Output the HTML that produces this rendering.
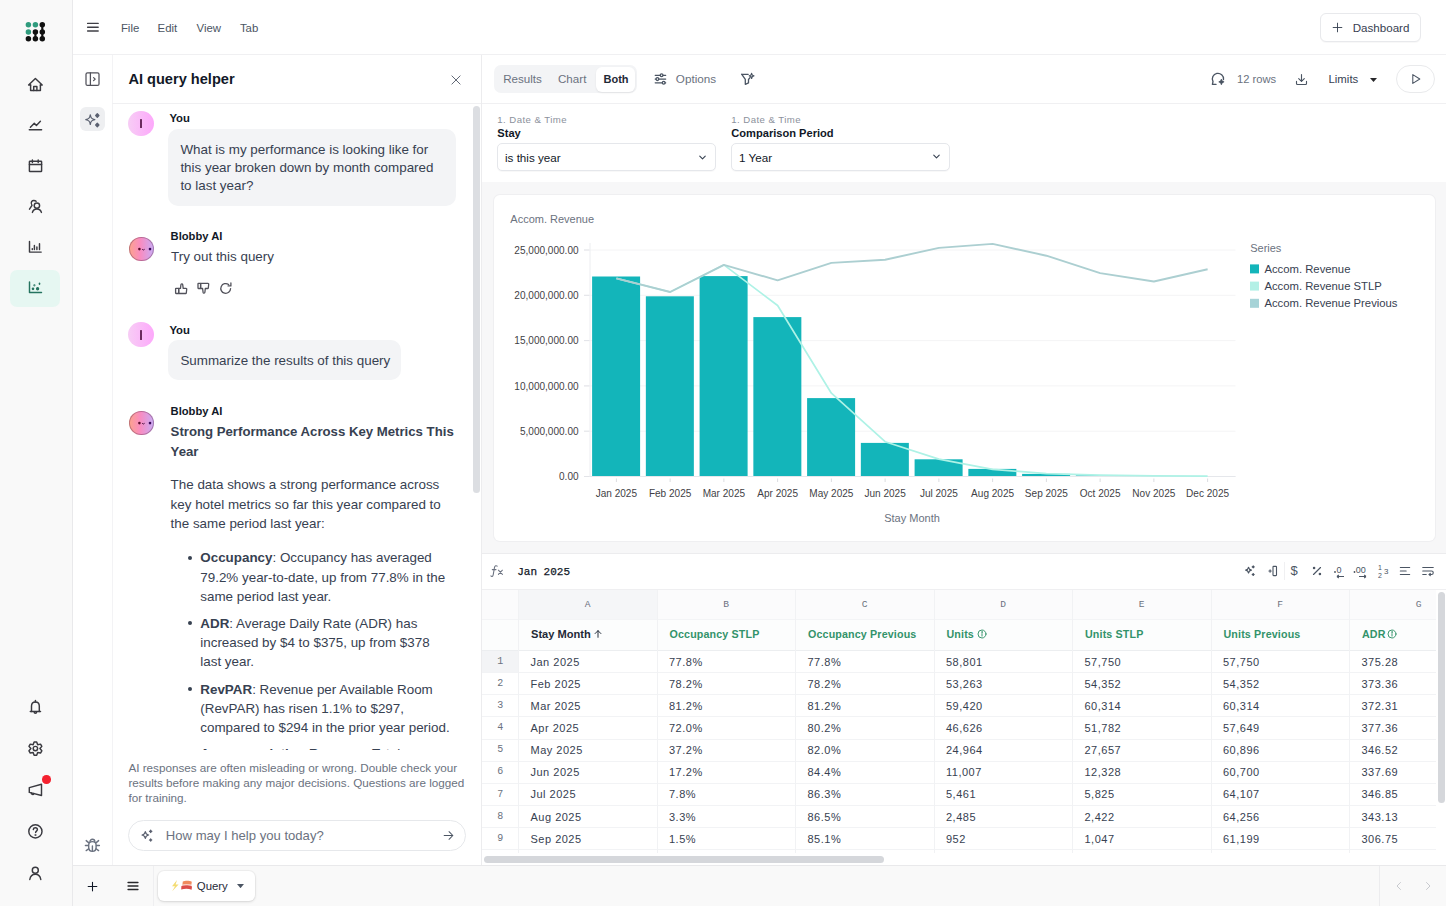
<!DOCTYPE html>
<html><head><meta charset="utf-8"><title>Query</title>
<style>
html,body{margin:0;padding:0;}
body{width:1446px;height:906px;overflow:hidden;position:relative;background:#fff;font-family:"Liberation Sans", sans-serif;}
.r{position:absolute;box-sizing:border-box;}
.t{position:absolute;white-space:nowrap;}
</style></head><body>
<div class="r" style="left:0.00px;top:0.00px;width:72.00px;height:906.00px;background:#f9f9f9;"></div>
<div class="r" style="left:72.00px;top:0.00px;width:1.00px;height:906.00px;background:#e9e9eb;"></div>
<div class="r" style="left:73.00px;top:54.00px;width:1373.00px;height:1.00px;background:#f0f0f2;"></div>
<div class="r" style="left:111.50px;top:55.00px;width:1.00px;height:810.00px;background:#f3f3f5;"></div>
<div class="r" style="left:112.00px;top:103.00px;width:369.00px;height:1.00px;background:#f0f0f2;"></div>
<div class="r" style="left:481.00px;top:55.00px;width:1.00px;height:810.00px;background:#ececee;"></div>
<div class="r" style="left:482.00px;top:102.50px;width:964.00px;height:1.00px;background:#f0f0f2;"></div>
<div class="r" style="left:482.00px;top:182.00px;width:964.00px;height:371.00px;background:#f7f7f8;"></div>
<div class="r" style="left:482.00px;top:552.50px;width:964.00px;height:1.00px;background:#ececee;"></div>
<div class="r" style="left:494.00px;top:195.00px;width:941.00px;height:346.00px;background:#fff;border-radius:6px;box-shadow:0 0 0 1px #efeff1;"></div>
<div class="r" style="left:482.00px;top:588.50px;width:964.00px;height:1.00px;background:#efeff1;"></div>
<div class="r" style="left:73.00px;top:865.00px;width:1373.00px;height:41.00px;background:#f9f9f9;"></div>
<div class="r" style="left:73.00px;top:865.00px;width:1373.00px;height:1.00px;background:#e9e9eb;"></div>
<svg class="r" style="left:20.00px;top:15.00px;" width="32" height="32" viewBox="0 0 32 32" fill="none"><circle cx="8.399999999999999" cy="9.8" r="2.75" fill="#2f9b7d"/><circle cx="15.399999999999999" cy="9.8" r="2.75" fill="#2f9b7d"/><circle cx="22.299999999999997" cy="9.8" r="2.75" fill="#111"/><circle cx="8.399999999999999" cy="16.9" r="2.75" fill="#2f9b7d"/><circle cx="15.399999999999999" cy="16.9" r="2.75" fill="#111"/><circle cx="22.299999999999997" cy="16.9" r="2.75" fill="#111"/><circle cx="8.399999999999999" cy="23.700000000000003" r="2.75" fill="#111"/><circle cx="15.399999999999999" cy="23.700000000000003" r="2.75" fill="#111"/><circle cx="22.299999999999997" cy="23.700000000000003" r="2.75" fill="#111"/><rect x="14.349999999999998" y="16.9" width="2.1" height="6.800000000000004" fill="#111"/><rect x="21.249999999999996" y="9.8" width="2.1" height="13.900000000000002" fill="#111"/></svg>
<svg class="r" style="left:24px;top:74px" width="23" height="22" viewBox="24 74 23 22" fill="none" stroke="#3a3a40" stroke-width="1.45" stroke-linecap="round" stroke-linejoin="round"><path d="M30.6 85 H28.6 L35.4 78.4 L42.2 85 H40.4"/><path d="M30.6 85 V90.4 H40.4 V85"/><path d="M33.7 90.4 V86.4 H36.9 V90.4"/></svg>
<svg class="r" style="left:24px;top:114px" width="23" height="22" viewBox="24 114 23 22" fill="none" stroke="#3a3a40" stroke-width="1.45" stroke-linecap="round" stroke-linejoin="round"><path d="M30.4 127.3 L34.3 123.3 L36.4 125.4 L40.4 121.3"/><path d="M29.3 129.8 H41.6"/></svg>
<svg class="r" style="left:24px;top:155px" width="23" height="22" viewBox="24 155 23 22" fill="none" stroke="#3a3a40" stroke-width="1.45" stroke-linecap="round" stroke-linejoin="round"><rect x="29.4" y="161.2" width="12.2" height="10.4" rx="0.6"/><path d="M29.4 164.4 H41.6"/><path d="M32.4 160 V162.4 M38.2 160 V162.4"/></svg>
<svg class="r" style="left:24px;top:196px" width="23" height="22" viewBox="24 196 23 22" fill="none" stroke="#3a3a40" stroke-width="1.45" stroke-linecap="round" stroke-linejoin="round"><circle cx="36.9" cy="205.6" r="2.7"/><path d="M32.4 212.4 C33 210 34.6 208.9 36.9 208.9 C39.2 208.9 40.8 210 41.4 212.4"/><path d="M36.1 201.3 C35 200.3 32.6 200.1 31.6 201.6 C30.8 202.9 31.3 204.4 32 205.4 L29.5 209.2"/></svg>
<svg class="r" style="left:24px;top:237px" width="23" height="22" viewBox="24 237 23 22" fill="none" stroke="#3a3a40" stroke-width="1.45" stroke-linecap="round" stroke-linejoin="round"><path d="M29.5 241.5 V252.1 H41.2"/><path d="M32.3 248.6 V249.4 M34.4 245.4 V249.4 M36.9 246.9 V249.4 M39.5 243.8 V249.4"/></svg>
<div class="r" style="left:10.00px;top:270.00px;width:50.00px;height:37.00px;background:#e6f7f2;border-radius:7px;"></div>
<svg class="r" style="left:24px;top:277px" width="23" height="22" viewBox="24 277 23 22" fill="none" stroke="#24735f" stroke-width="1.45" stroke-linecap="round" stroke-linejoin="round"><path d="M29.5 282 V292.5 H41.5"/><circle cx="33" cy="288.8" r="0.6" fill="#24735f"/><circle cx="37.6" cy="288.8" r="0.95" fill="#24735f"/><circle cx="34.4" cy="285.3" r="0.35" fill="#24735f"/><path d="M39.5 283.3 V284.2"/></svg>
<svg class="r" style="left:24px;top:696px" width="23" height="23" viewBox="24 696 23 23" fill="none" stroke="#3a3a40" stroke-width="1.45" stroke-linecap="round" stroke-linejoin="round"><path d="M31.5 711.4 V706 C31.5 703.6 33.2 701.9 35.4 701.9 C37.6 701.9 39.3 703.6 39.3 706 V711.4"/><path d="M30.3 711.4 H40.5"/><path d="M35.4 700.4 V701.9"/><path d="M34.2 712 A1.2 1.2 0 0 0 36.6 712"/></svg>
<svg class="r" style="left:24px;top:737px" width="23" height="23" viewBox="24 737 23 23" fill="none" stroke="#3a3a40" stroke-width="1.45" stroke-linecap="round" stroke-linejoin="round"><path d="M33.15 744.70 L34.10 741.92 L36.70 741.92 L37.65 744.70 L40.53 744.14 L41.83 746.39 L39.90 748.60 L41.83 750.81 L40.53 753.06 L37.65 752.50 L36.70 755.28 L34.10 755.28 L33.15 752.50 L30.27 753.06 L28.97 750.81 L30.90 748.60 L28.97 746.39 L30.27 744.14Z"/><circle cx="35.4" cy="748.6" r="2.2"/></svg>
<svg class="r" style="left:24px;top:779px" width="23" height="21" viewBox="24 779 23 21" fill="none" stroke="#3a3a40" stroke-width="1.45" stroke-linecap="round" stroke-linejoin="round"><path d="M29.3 787.6 L41.5 784.3 V795.5 L29.3 792.4 Z"/><path d="M31.4 792.9 A1.2 1.2 0 0 0 33.8 793.5"/></svg>
<div class="r" style="left:42.20px;top:775.30px;width:8.60px;height:8.60px;background:#f4212f;border-radius:50%;"></div>
<svg class="r" style="left:24px;top:820px" width="23" height="23" viewBox="24 820 23 23" fill="none" stroke="#3a3a40" stroke-width="1.45" stroke-linecap="round" stroke-linejoin="round"><circle cx="35.4" cy="831.4" r="6.6"/><path d="M33.3 829.6 C33.4 828.3 34.3 827.8 35.4 827.8 C36.6 827.8 37.4 828.6 37.4 829.6 C37.4 830.9 35.6 831.3 35.6 832.6"/><circle cx="35.5" cy="834.9" r="0.3" fill="#3a3a40"/></svg>
<svg class="r" style="left:24px;top:862px" width="23" height="23" viewBox="24 862 23 23" fill="none" stroke="#3a3a40" stroke-width="1.45" stroke-linecap="round" stroke-linejoin="round"><circle cx="35.3" cy="870.2" r="3"/><path d="M29.8 879.5 C30.4 876 32.5 874.3 35.3 874.3 C38.1 874.3 40.2 876 40.8 879.5"/></svg>
<svg class="r" style="left:84px;top:18px" width="18" height="18" viewBox="84 18 18 18" fill="none" stroke="#3f3f46" stroke-width="1.35" stroke-linecap="round" stroke-linejoin="round"><path d="M87.6 23.4 H98.2 M87.6 27.2 H98.2 M87.6 31 H98.2"/></svg>
<div class="t" style="left:120.90px;top:20.74px;font-size:11.4px;line-height:14.82px;color:#4b5563;font-weight:400;font-family:'Liberation Sans', sans-serif;">File</div>
<div class="t" style="left:157.60px;top:20.74px;font-size:11.4px;line-height:14.82px;color:#4b5563;font-weight:400;font-family:'Liberation Sans', sans-serif;">Edit</div>
<div class="t" style="left:196.60px;top:20.74px;font-size:11.4px;line-height:14.82px;color:#4b5563;font-weight:400;font-family:'Liberation Sans', sans-serif;">View</div>
<div class="t" style="left:239.90px;top:20.74px;font-size:11.4px;line-height:14.82px;color:#4b5563;font-weight:400;font-family:'Liberation Sans', sans-serif;">Tab</div>
<div class="r" style="left:1319.50px;top:12.50px;width:101.00px;height:29.00px;background:#fff;border:1px solid #e8e9ec;border-radius:6px;box-shadow:0 1px 1px rgba(0,0,0,0.03);"></div>
<svg class="r" style="left:1331.10px;top:20.80px" width="13" height="13" viewBox="0 0 24 24" fill="none" stroke="#374151" stroke-width="1.7" stroke-linecap="round" stroke-linejoin="round"><path d="M12 4v16M4 12h16"/></svg>
<div class="t" style="left:1352.70px;top:20.24px;font-size:11.6px;line-height:15.08px;color:#374151;font-weight:400;font-family:'Liberation Sans', sans-serif;">Dashboard</div>
<svg class="r" style="left:80px;top:66px" width="26" height="26" viewBox="80 66 26 26" fill="none" stroke="#52525b" stroke-width="1.25" stroke-linecap="round" stroke-linejoin="round"><rect x="86" y="72.8" width="13" height="12.6" rx="1.5"/><path d="M90.4 72.8 V85.4"/><path d="M93.6 77.6 L95.2 79.1 L93.6 80.6"/></svg>
<div class="r" style="left:80.00px;top:107.00px;width:25.00px;height:24.00px;background:#eeeff1;border-radius:6px;"></div>
<svg class="r" style="left:80px;top:107px" width="25" height="24" viewBox="80 107 25 24" fill="none" stroke="#5b6170" stroke-width="1.3" stroke-linecap="round" stroke-linejoin="round"><path d="M90.3 114.9 C90.7 118 91.6 118.9 94.8 119.6 C91.6 120.3 90.7 121.2 90.3 124.3 C89.9 121.2 89 120.3 85.8 119.6 C89 118.9 89.9 118 90.3 114.9 Z"/><path d="M97.3 113.8 L98.9 115.5 L97.3 117.2 L95.7 115.5 Z" fill="#5b6170"/><path d="M97.3 123.3 L98.9 125 L97.3 126.7 L95.7 125 Z" fill="#5b6170"/></svg>
<svg class="r" style="left:80px;top:834px" width="26" height="24" viewBox="80 834 26 24" fill="none" stroke="#6b7280" stroke-width="1.4" stroke-linecap="round" stroke-linejoin="round"><path d="M90 841.6 A2.4 2.4 0 0 1 94.8 841.6"/><path d="M88.7 845 C88.7 842.8 90.3 841.6 92.4 841.6 C94.5 841.6 96.1 842.8 96.1 845 V847.4 C96.1 849.6 94.5 851.2 92.4 851.2 C90.3 851.2 88.7 849.6 88.7 847.4 Z"/><path d="M92.4 846 V851"/><path d="M88.6 842.6 L86.2 840.6 M88.3 845.5 H85.4 M88.7 848.8 L86.2 850.6 M96.2 842.6 L98.6 840.6 M96.5 845.5 H99.4 M96.1 848.8 L98.6 850.6"/></svg>
<div class="t" style="left:128.40px;top:70.45px;font-size:14.6px;line-height:18.98px;color:#111827;font-weight:700;font-family:'Liberation Sans', sans-serif;">AI query helper</div>
<svg class="r" style="left:449.00px;top:72.50px" width="14" height="14" viewBox="0 0 24 24" fill="none" stroke="#4b5563" stroke-width="1.5" stroke-linecap="round" stroke-linejoin="round"><path d="M5 5l14 14M19 5L5 19"/></svg>
<div class="r" style="left:473.00px;top:105.50px;width:7.00px;height:387.50px;background:#dcdee2;border-radius:4px;"></div>
<div class="r" style="left:128.20px;top:110.60px;width:25.40px;height:25.40px;background:linear-gradient(90deg,#f7cdf5,#fda8fb);border-radius:50%;"></div>
<div class="r" style="left:139.90px;top:118.80px;width:2.00px;height:9.70px;background:#6b2a5e;border-radius:0.5px;"></div>
<div class="t" style="left:169.40px;top:110.74px;font-size:11.3px;line-height:14.69px;color:#111827;font-weight:700;font-family:'Liberation Sans', sans-serif;">You</div>
<div class="r" style="left:168.30px;top:129.20px;width:287.70px;height:76.80px;background:#f3f4f6;border-radius:10px;"></div>
<div class="t" style="left:180.40px;top:140.95px;font-size:13.4px;line-height:17.42px;color:#374151;font-weight:400;font-family:'Liberation Sans', sans-serif;">What is my performance is looking like for</div>
<div class="t" style="left:180.40px;top:159.35px;font-size:13.4px;line-height:17.42px;color:#374151;font-weight:400;font-family:'Liberation Sans', sans-serif;">this year broken down by month compared</div>
<div class="t" style="left:180.40px;top:177.25px;font-size:13.4px;line-height:17.42px;color:#374151;font-weight:400;font-family:'Liberation Sans', sans-serif;">to last year?</div>
<div class="r" style="left:129.40px;top:236.60px;width:24.80px;height:24.40px;background:linear-gradient(90deg,#fca38b 0%,#f98cc0 45%,#c8acf7 100%);border-radius:50%;box-shadow:inset 0 0 0 1px rgba(120,60,90,0.45);"></div>
<svg class="r" style="left:129.80px;top:236.80px;" width="24" height="24" viewBox="0 0 24 24" fill="none"><circle cx="9.399999999999977" cy="12.1" r="1.3" fill="#5a0d2a"/><circle cx="20.0" cy="12.1" r="1.3" fill="#3a0a5a"/><path d="M12.2 12.3q1.2 1.4 2.4 0" stroke="#4a1040" stroke-width="1" fill="none"/></svg>
<div class="t" style="left:170.60px;top:228.64px;font-size:11.2px;line-height:14.56px;color:#111827;font-weight:700;font-family:'Liberation Sans', sans-serif;">Blobby AI</div>
<div class="t" style="left:171.00px;top:248.25px;font-size:13.4px;line-height:17.42px;color:#374151;font-weight:400;font-family:'Liberation Sans', sans-serif;">Try out this query</div>
<svg class="r" style="left:172px;top:280px" width="62" height="18" viewBox="172 280 62 18" fill="none" stroke="#52525b" stroke-width="1.3" stroke-linecap="round" stroke-linejoin="round"><rect x="175.6" y="288.4" width="3.1" height="5.1" rx="0.4"/><path d="M178.7 288.4 H180.5 L180.9 284.7 C181 283.7 182.5 283.5 182.7 284.6 L183.2 288.4 H186 C186.5 288.4 186.8 288.8 186.7 289.3 L186.3 293 C186.2 293.3 186 293.5 185.7 293.5 H178.7 Z"/><rect x="198" y="283.3" width="2.6" height="5.2" rx="0.4"/><path d="M200.6 283.3 H208 C208.4 283.3 208.8 283.7 208.7 284.2 L208.3 288 C208.2 288.3 208 288.5 207.7 288.5 H205.3 L204.9 292.3 C204.8 293.3 203.3 293.5 203.1 292.4 L202.6 288.5 H200.6 Z"/><path d="M230.6 288.6 A4.9 4.9 0 1 1 228.6 284.5"/><path d="M230.9 283 V285.9 H228.1"/></svg>
<div class="r" style="left:128.20px;top:321.80px;width:25.40px;height:25.40px;background:linear-gradient(90deg,#f7cdf5,#fda8fb);border-radius:50%;"></div>
<div class="r" style="left:139.90px;top:330.00px;width:2.00px;height:9.70px;background:#6b2a5e;border-radius:0.5px;"></div>
<div class="t" style="left:169.40px;top:322.54px;font-size:11.3px;line-height:14.69px;color:#111827;font-weight:700;font-family:'Liberation Sans', sans-serif;">You</div>
<div class="r" style="left:168.30px;top:340.40px;width:232.70px;height:40.10px;background:#f3f4f6;border-radius:10px;"></div>
<div class="t" style="left:180.40px;top:352.45px;font-size:13.4px;line-height:17.42px;color:#374151;font-weight:400;font-family:'Liberation Sans', sans-serif;">Summarize the results of this query</div>
<div class="r" style="left:129.40px;top:410.80px;width:24.80px;height:24.40px;background:linear-gradient(90deg,#fca38b 0%,#f98cc0 45%,#c8acf7 100%);border-radius:50%;box-shadow:inset 0 0 0 1px rgba(120,60,90,0.45);"></div>
<svg class="r" style="left:129.80px;top:411.00px;" width="24" height="24" viewBox="0 0 24 24" fill="none"><circle cx="9.399999999999977" cy="12.1" r="1.3" fill="#5a0d2a"/><circle cx="20.0" cy="12.1" r="1.3" fill="#3a0a5a"/><path d="M12.2 12.3q1.2 1.4 2.4 0" stroke="#4a1040" stroke-width="1" fill="none"/></svg>
<div class="t" style="left:170.60px;top:403.94px;font-size:11.2px;line-height:14.56px;color:#111827;font-weight:700;font-family:'Liberation Sans', sans-serif;">Blobby AI</div>
<div class="t" style="left:170.60px;top:423.45px;font-size:13.2px;line-height:17.16px;color:#374151;font-weight:700;font-family:'Liberation Sans', sans-serif;">Strong Performance Across Key Metrics This</div>
<div class="t" style="left:170.60px;top:442.65px;font-size:13.2px;line-height:17.16px;color:#374151;font-weight:700;font-family:'Liberation Sans', sans-serif;">Year</div>
<div class="t" style="left:170.60px;top:476.45px;font-size:13.4px;line-height:17.42px;color:#374151;font-weight:400;font-family:'Liberation Sans', sans-serif;">The data shows a strong performance across</div>
<div class="t" style="left:170.60px;top:495.75px;font-size:13.4px;line-height:17.42px;color:#374151;font-weight:400;font-family:'Liberation Sans', sans-serif;">key hotel metrics so far this year compared to</div>
<div class="t" style="left:170.60px;top:514.75px;font-size:13.4px;line-height:17.42px;color:#374151;font-weight:400;font-family:'Liberation Sans', sans-serif;">the same period last year:</div>
<div class="r" style="left:187.60px;top:555.80px;width:4.20px;height:4.20px;background:#374151;border-radius:50%;"></div>
<div class="t" style="left:200.30px;top:549.45px;font-size:13.4px;line-height:17.42px;color:#374151;font-weight:400;font-family:'Liberation Sans', sans-serif;"><b>Occupancy</b>: Occupancy has averaged</div>
<div class="t" style="left:200.30px;top:568.75px;font-size:13.4px;line-height:17.42px;color:#374151;font-weight:400;font-family:'Liberation Sans', sans-serif;">79.2% year-to-date, up from 77.8% in the</div>
<div class="t" style="left:200.30px;top:587.75px;font-size:13.4px;line-height:17.42px;color:#374151;font-weight:400;font-family:'Liberation Sans', sans-serif;">same period last year.</div>
<div class="r" style="left:187.60px;top:621.10px;width:4.20px;height:4.20px;background:#374151;border-radius:50%;"></div>
<div class="t" style="left:200.30px;top:614.75px;font-size:13.4px;line-height:17.42px;color:#374151;font-weight:400;font-family:'Liberation Sans', sans-serif;"><b>ADR</b>: Average Daily Rate (ADR) has</div>
<div class="t" style="left:200.30px;top:633.75px;font-size:13.4px;line-height:17.42px;color:#374151;font-weight:400;font-family:'Liberation Sans', sans-serif;">increased by $4 to $375, up from $378</div>
<div class="t" style="left:200.30px;top:653.15px;font-size:13.4px;line-height:17.42px;color:#374151;font-weight:400;font-family:'Liberation Sans', sans-serif;">last year.</div>
<div class="r" style="left:187.60px;top:686.90px;width:4.20px;height:4.20px;background:#374151;border-radius:50%;"></div>
<div class="t" style="left:200.30px;top:680.55px;font-size:13.4px;line-height:17.42px;color:#374151;font-weight:400;font-family:'Liberation Sans', sans-serif;"><b>RevPAR</b>: Revenue per Available Room</div>
<div class="t" style="left:200.30px;top:699.75px;font-size:13.4px;line-height:17.42px;color:#374151;font-weight:400;font-family:'Liberation Sans', sans-serif;">(RevPAR) has risen 1.1% to $297,</div>
<div class="t" style="left:200.30px;top:719.15px;font-size:13.4px;line-height:17.42px;color:#374151;font-weight:400;font-family:'Liberation Sans', sans-serif;">compared to $294 in the prior year period.</div>
<div class="r" style="left:180px;top:744px;width:280px;height:6.3px;overflow:hidden;">
<div class="t" style="left:20.3px;top:1.0px;font-size:13.4px;line-height:17px;color:#374151;"><b>Accommodation Revenue</b>: Total</div>
<div class="r" style="left:7.60px;top:8.30px;width:4.20px;height:4.20px;background:#374151;border-radius:50%;"></div>
</div>
<div class="t" style="left:128.40px;top:760.34px;font-size:11.7px;line-height:15.21px;color:#6b7280;font-weight:400;font-family:'Liberation Sans', sans-serif;">AI responses are often misleading or wrong. Double check your</div>
<div class="t" style="left:128.40px;top:775.14px;font-size:11.7px;line-height:15.21px;color:#6b7280;font-weight:400;font-family:'Liberation Sans', sans-serif;">results before making any major decisions. Questions are logged</div>
<div class="t" style="left:128.40px;top:789.74px;font-size:11.7px;line-height:15.21px;color:#6b7280;font-weight:400;font-family:'Liberation Sans', sans-serif;">for training.</div>
<div class="r" style="left:128.40px;top:820.20px;width:337.80px;height:30.60px;background:#fff;border:1px solid #e6e8eb;border-radius:16px;"></div>
<div class="r" style="left:139px;top:828px;width:16px;height:16px;color:#5b6170"><svg width="16" height="16" viewBox="0 0 24 24" fill="none" stroke="currentColor" stroke-width="1.8" stroke-linejoin="round"><path d="M9.5 5.5c.5 3 2 4.5 5 5-3 .5-4.5 2-5 5-.5-3-2-4.5-5-5 3-.5 4.5-2 5-5z"/><path d="M17.5 3.2c.2 1.1.7 1.6 1.8 1.8-1.1.2-1.6.7-1.8 1.8-.2-1.1-.7-1.6-1.8-1.8 1.1-.2 1.6-.7 1.8-1.8z" fill="currentColor"/><path d="M17.5 16.2c.2 1.1.7 1.6 1.8 1.8-1.1.2-1.6.7-1.8 1.8-.2-1.1-.7-1.6-1.8-1.8 1.1-.2 1.6-.7 1.8-1.8z" fill="currentColor"/></svg></div>
<div class="t" style="left:165.80px;top:827.25px;font-size:13.1px;line-height:17.03px;color:#6b7280;font-weight:400;font-family:'Liberation Sans', sans-serif;">How may I help you today?</div>
<svg class="r" style="left:441.80px;top:829.00px" width="13" height="13" viewBox="0 0 24 24" fill="none" stroke="#4b5563" stroke-width="1.9" stroke-linecap="round" stroke-linejoin="round"><path d="M4 12h16M13 5l7 7-7 7"/></svg>
<div class="r" style="left:493.70px;top:65.00px;width:143.00px;height:28.00px;background:#f3f4f6;border-radius:7px;"></div>
<div class="r" style="left:595.50px;top:66.50px;width:39.80px;height:25.00px;background:#fff;border-radius:6px;box-shadow:0 1px 2px rgba(0,0,0,0.08);"></div>
<div class="t" style="left:503.20px;top:71.14px;font-size:11.6px;line-height:15.08px;color:#6b7280;font-weight:400;font-family:'Liberation Sans', sans-serif;">Results</div>
<div class="t" style="left:558.00px;top:71.14px;font-size:11.6px;line-height:15.08px;color:#6b7280;font-weight:400;font-family:'Liberation Sans', sans-serif;">Chart</div>
<div class="t" style="left:603.50px;top:71.74px;font-size:11px;line-height:14.3px;color:#1f2937;font-weight:700;font-family:'Liberation Sans', sans-serif;">Both</div>
<svg class="r" style="left:650px;top:68px" width="22" height="22" viewBox="650 68 22 22" fill="none" stroke="#4b5563" stroke-width="1.25" stroke-linecap="round" stroke-linejoin="round"><path d="M655.2 75.3 H660.2 M663 75.3 H665.7 M655.2 79.1 H656 M658.8 79.1 H665.7 M655.2 82.8 H662.3 M665.1 82.8 H665.7"/><circle cx="661.6" cy="75.3" r="1.4"/><circle cx="657.4" cy="79.1" r="1.4"/><circle cx="663.7" cy="82.8" r="1.4"/></svg>
<div class="t" style="left:675.80px;top:71.04px;font-size:11.7px;line-height:15.21px;color:#6b7280;font-weight:400;font-family:'Liberation Sans', sans-serif;">Options</div>
<svg class="r" style="left:736px;top:68px" width="24" height="22" viewBox="736 68 24 22" fill="none" stroke="#4b5563" stroke-width="1.3" stroke-linecap="round" stroke-linejoin="round"><path d="M741.8 74.3 H748.2"/><path d="M741.8 74.3 L745.3 79.4 V84.3 L748.5 82.9 V79.5 L750 77.6"/><path d="M751.6 73.5 C751.8 75.1 752.3 75.6 753.9 75.9 C752.3 76.2 751.8 76.7 751.6 78.3 C751.4 76.7 750.9 76.2 749.3 75.9 C750.9 75.6 751.4 75.1 751.6 73.5 Z"/></svg>
<svg class="r" style="left:1206px;top:67px" width="24" height="25" viewBox="1206 67 24 25" fill="none" stroke="#4b5563" stroke-width="1.35" stroke-linecap="round" stroke-linejoin="round"><path d="M1223.5 79.5 A5.6 5.6 0 1 0 1213 81.6 L1212.4 84.4 H1216"/><path d="M1221.4 79.6 C1221.6 81.1 1222.1 81.6 1223.6 81.9 C1222.1 82.2 1221.6 82.7 1221.4 84.2 C1221.2 82.7 1220.7 82.2 1219.2 81.9 C1220.7 81.6 1221.2 81.1 1221.4 79.6 Z" fill="#4b5563"/></svg>
<div class="t" style="left:1237.00px;top:71.54px;font-size:11.2px;line-height:14.56px;color:#6b7280;font-weight:400;font-family:'Liberation Sans', sans-serif;">12 rows</div>
<svg class="r" style="left:1294.00px;top:71.80px" width="15" height="15" viewBox="0 0 24 24" fill="none" stroke="#4b5563" stroke-width="1.8" stroke-linecap="round" stroke-linejoin="round"><path d="M12 4v11M7.5 10.5 12 15l4.5-4.5"/><path d="M4 15v3.5A1.5 1.5 0 0 0 5.5 20h13a1.5 1.5 0 0 0 1.5-1.5V15"/></svg>
<div class="t" style="left:1328.50px;top:72.14px;font-size:11.4px;line-height:14.82px;color:#374151;font-weight:400;font-family:'Liberation Sans', sans-serif;">Limits</div>
<svg class="r" style="left:1369.80px;top:77.80px;" width="7" height="4" viewBox="0 0 7 4" fill="none"><path d="M0 0h7L3.5 4z" fill="#27272a"/></svg>
<div class="r" style="left:1396.30px;top:64.70px;width:38.90px;height:28.30px;background:#fff;border:1px solid #e9eaec;border-radius:14px;"></div>
<svg class="r" style="left:1408.50px;top:72.00px" width="14" height="14" viewBox="0 0 24 24" fill="none" stroke="#4b5563" stroke-width="1.8" stroke-linecap="round" stroke-linejoin="round"><path d="M6.5 4.5v15l12-7.5z"/></svg>
<div class="t" style="left:497.30px;top:114.23px;font-size:9.6px;line-height:12.48px;color:#8b919c;font-weight:400;font-family:'Liberation Sans', sans-serif;letter-spacing:0.45px;">1. Date &amp; Time</div>
<div class="t" style="left:497.30px;top:126.14px;font-size:11.1px;line-height:14.43px;color:#111827;font-weight:700;font-family:'Liberation Sans', sans-serif;">Stay</div>
<div class="r" style="left:497.30px;top:143.20px;width:218.40px;height:28.20px;background:#fff;border:1px solid #e5e7eb;border-radius:5px;box-shadow:0 1px 1px rgba(0,0,0,0.03);"></div>
<div class="t" style="left:505.00px;top:149.69px;font-size:11.65px;line-height:15.15px;color:#111827;font-weight:400;font-family:'Liberation Sans', sans-serif;">is this year</div>
<svg class="r" style="left:696.90px;top:151.50px" width="11" height="11" viewBox="0 0 24 24" fill="none" stroke="#374151" stroke-width="2.4" stroke-linecap="round" stroke-linejoin="round"><path d="M6 9l6 6 6-6"/></svg>
<div class="t" style="left:731.30px;top:114.23px;font-size:9.6px;line-height:12.48px;color:#8b919c;font-weight:400;font-family:'Liberation Sans', sans-serif;letter-spacing:0.45px;">1. Date &amp; Time</div>
<div class="t" style="left:731.30px;top:126.14px;font-size:11.1px;line-height:14.43px;color:#111827;font-weight:700;font-family:'Liberation Sans', sans-serif;">Comparison Period</div>
<div class="r" style="left:731.30px;top:143.20px;width:219.10px;height:28.20px;background:#fff;border:1px solid #e5e7eb;border-radius:5px;box-shadow:0 1px 1px rgba(0,0,0,0.03);"></div>
<div class="t" style="left:739.00px;top:149.69px;font-size:11.65px;line-height:15.15px;color:#111827;font-weight:400;font-family:'Liberation Sans', sans-serif;">1 Year</div>
<svg class="r" style="left:931.00px;top:150.50px" width="11" height="11" viewBox="0 0 24 24" fill="none" stroke="#374151" stroke-width="2.4" stroke-linecap="round" stroke-linejoin="round"><path d="M6 9l6 6 6-6"/></svg>
<div class="t" style="left:510.30px;top:212.04px;font-size:11px;line-height:14.3px;color:#6b7280;font-weight:400;font-family:'Liberation Sans', sans-serif;">Accom. Revenue</div>
<svg class="r" style="left:494px;top:195px;font-family:'Liberation Sans',sans-serif" width="941" height="346" viewBox="494 195 941 346"><line x1="584" y1="476.5" x2="1235.5" y2="476.5" stroke="#f4f4f5" stroke-width="1"/><line x1="584" y1="476.5" x2="589.5" y2="476.5" stroke="#e3e4e8" stroke-width="1"/><text x="578.6" y="480.3" text-anchor="end" font-size="10.05" fill="#3f3f46">0.00</text><line x1="584" y1="431.2" x2="1235.5" y2="431.2" stroke="#f4f4f5" stroke-width="1"/><line x1="584" y1="431.2" x2="589.5" y2="431.2" stroke="#e3e4e8" stroke-width="1"/><text x="578.6" y="435.0" text-anchor="end" font-size="10.05" fill="#3f3f46">5,000,000.00</text><line x1="584" y1="385.9" x2="1235.5" y2="385.9" stroke="#f4f4f5" stroke-width="1"/><line x1="584" y1="385.9" x2="589.5" y2="385.9" stroke="#e3e4e8" stroke-width="1"/><text x="578.6" y="389.7" text-anchor="end" font-size="10.05" fill="#3f3f46">10,000,000.00</text><line x1="584" y1="340.6" x2="1235.5" y2="340.6" stroke="#f4f4f5" stroke-width="1"/><line x1="584" y1="340.6" x2="589.5" y2="340.6" stroke="#e3e4e8" stroke-width="1"/><text x="578.6" y="344.40000000000003" text-anchor="end" font-size="10.05" fill="#3f3f46">15,000,000.00</text><line x1="584" y1="295.29999999999995" x2="1235.5" y2="295.29999999999995" stroke="#f4f4f5" stroke-width="1"/><line x1="584" y1="295.29999999999995" x2="589.5" y2="295.29999999999995" stroke="#e3e4e8" stroke-width="1"/><text x="578.6" y="299.09999999999997" text-anchor="end" font-size="10.05" fill="#3f3f46">20,000,000.00</text><line x1="584" y1="249.99999999999997" x2="1235.5" y2="249.99999999999997" stroke="#f4f4f5" stroke-width="1"/><line x1="584" y1="249.99999999999997" x2="589.5" y2="249.99999999999997" stroke="#e3e4e8" stroke-width="1"/><text x="578.6" y="253.79999999999998" text-anchor="end" font-size="10.05" fill="#3f3f46">25,000,000.00</text><line x1="590" y1="243" x2="590" y2="476.5" stroke="#ecedf0" stroke-width="1"/><rect x="592.10" y="276.5" width="48" height="200.50" fill="#13b5ba"/><line x1="616.38" y1="478.5" x2="616.38" y2="482.0" stroke="#dcdde1" stroke-width="1"/><text x="616.38" y="497" text-anchor="middle" font-size="10.05" fill="#3f3f46">Jan 2025</text><rect x="645.85" y="296.3" width="48" height="180.70" fill="#13b5ba"/><line x1="670.12" y1="478.5" x2="670.12" y2="482.0" stroke="#dcdde1" stroke-width="1"/><text x="670.12" y="497" text-anchor="middle" font-size="10.05" fill="#3f3f46">Feb 2025</text><rect x="699.60" y="276.1" width="48" height="200.90" fill="#13b5ba"/><line x1="723.88" y1="478.5" x2="723.88" y2="482.0" stroke="#dcdde1" stroke-width="1"/><text x="723.88" y="497" text-anchor="middle" font-size="10.05" fill="#3f3f46">Mar 2025</text><rect x="753.35" y="317.1" width="48" height="159.90" fill="#13b5ba"/><line x1="777.62" y1="478.5" x2="777.62" y2="482.0" stroke="#dcdde1" stroke-width="1"/><text x="777.62" y="497" text-anchor="middle" font-size="10.05" fill="#3f3f46">Apr 2025</text><rect x="807.10" y="398.1" width="48" height="78.90" fill="#13b5ba"/><line x1="831.38" y1="478.5" x2="831.38" y2="482.0" stroke="#dcdde1" stroke-width="1"/><text x="831.38" y="497" text-anchor="middle" font-size="10.05" fill="#3f3f46">May 2025</text><rect x="860.85" y="442.9" width="48" height="34.10" fill="#13b5ba"/><line x1="885.12" y1="478.5" x2="885.12" y2="482.0" stroke="#dcdde1" stroke-width="1"/><text x="885.12" y="497" text-anchor="middle" font-size="10.05" fill="#3f3f46">Jun 2025</text><rect x="914.60" y="459.3" width="48" height="17.70" fill="#13b5ba"/><line x1="938.88" y1="478.5" x2="938.88" y2="482.0" stroke="#dcdde1" stroke-width="1"/><text x="938.88" y="497" text-anchor="middle" font-size="10.05" fill="#3f3f46">Jul 2025</text><rect x="968.35" y="468.9" width="48" height="8.10" fill="#13b5ba"/><line x1="992.62" y1="478.5" x2="992.62" y2="482.0" stroke="#dcdde1" stroke-width="1"/><text x="992.62" y="497" text-anchor="middle" font-size="10.05" fill="#3f3f46">Aug 2025</text><rect x="1022.10" y="473.9" width="48" height="3.10" fill="#13b5ba"/><line x1="1046.38" y1="478.5" x2="1046.38" y2="482.0" stroke="#dcdde1" stroke-width="1"/><text x="1046.38" y="497" text-anchor="middle" font-size="10.05" fill="#3f3f46">Sep 2025</text><rect x="1075.85" y="475.4" width="48" height="1.60" fill="#13b5ba"/><line x1="1100.12" y1="478.5" x2="1100.12" y2="482.0" stroke="#dcdde1" stroke-width="1"/><text x="1100.12" y="497" text-anchor="middle" font-size="10.05" fill="#3f3f46">Oct 2025</text><rect x="1129.60" y="476.0" width="48" height="1.00" fill="#13b5ba"/><line x1="1153.88" y1="478.5" x2="1153.88" y2="482.0" stroke="#dcdde1" stroke-width="1"/><text x="1153.88" y="497" text-anchor="middle" font-size="10.05" fill="#3f3f46">Nov 2025</text><rect x="1183.35" y="476.3" width="48" height="0.70" fill="#13b5ba"/><line x1="1207.62" y1="478.5" x2="1207.62" y2="482.0" stroke="#dcdde1" stroke-width="1"/><text x="1207.62" y="497" text-anchor="middle" font-size="10.05" fill="#3f3f46">Dec 2025</text><line x1="589.5" y1="476.5" x2="1235.5" y2="476.5" stroke="#e5e7eb" stroke-width="1"/><polyline points="616.38,278.4 670.12,292 723.88,264.9 777.62,305.5 831.38,393.2 885.12,441.7 938.88,459.1 992.62,469.4 1046.38,473.6 1100.12,475.2 1153.88,475.9 1207.62,476.2" stroke="#aef2e6" stroke-width="1.7" fill="none" stroke-linejoin="round"/><polyline points="616.38,278.4 670.12,292 723.88,264.9 777.62,280.3 831.38,262.9 885.12,259.7 938.88,247.9 992.62,243.9 1046.38,255.7 1100.12,273.1 1153.88,281.5 1207.62,269.2" stroke="#accfd1" stroke-width="1.9" fill="none" stroke-linejoin="round"/><text x="912" y="521.8" text-anchor="middle" font-size="11" fill="#6b7280">Stay Month</text><text x="1250.2" y="251.7" font-size="11" fill="#6b7280">Series</text><rect x="1250" y="264.4" width="9" height="9" fill="#13b5ba"/><text x="1264.4" y="272.90" font-size="11.3" fill="#374151">Accom. Revenue</text><rect x="1250" y="281.59999999999997" width="9" height="9" fill="#b3f0e6"/><text x="1264.4" y="290.15" font-size="11.3" fill="#374151">Accom. Revenue STLP</text><rect x="1250" y="298.79999999999995" width="9" height="9" fill="#a6d3d7"/><text x="1264.4" y="307.40" font-size="11.3" fill="#374151">Accom. Revenue Previous</text></svg>
<svg class="r" style="left:486px;top:560px" width="22" height="22" viewBox="486 560 22 22" fill="none" stroke="#6b7280" stroke-width="1.05" stroke-linecap="round" stroke-linejoin="round"><path d="M497.2 566.2 C496.4 565.3 494.8 565.5 494.5 567.3 L493.2 574.8 C492.9 576.6 491.6 576.9 490.9 575.9"/><path d="M492.3 569.6 H496"/><path d="M498.4 570.2 L502.4 574.4 M502.4 570.2 L498.4 574.4"/></svg>
<div class="t" style="left:517.20px;top:564.74px;font-size:11px;line-height:14.3px;color:#111827;font-weight:400;font-family:'Liberation Mono', monospace;-webkit-text-stroke:0.25px #111827;">Jan 2025</div>
<svg class="r" style="left:1243.20px;top:563.70px" width="14" height="14" viewBox="0 0 24 24" fill="none" stroke="#4b5563" stroke-width="1.9" stroke-linecap="round" stroke-linejoin="round"><path d="M9.5 5.5c.5 3 2 4.5 5 5-3 .5-4.5 2-5 5-.5-3-2-4.5-5-5 3-.5 4.5-2 5-5z"/><path d="M17.5 3.2c.2 1.1.7 1.6 1.8 1.8-1.1.2-1.6.7-1.8 1.8-.2-1.1-.7-1.6-1.8-1.8 1.1-.2 1.6-.7 1.8-1.8z" fill="#4b5563"/><path d="M17.5 16.2c.2 1.1.7 1.6 1.8 1.8-1.1.2-1.6.7-1.8 1.8-.2-1.1-.7-1.6-1.8-1.8 1.1-.2 1.6-.7 1.8-1.8z" fill="#4b5563"/></svg>
<svg class="r" style="left:1265.60px;top:563.70px" width="14" height="14" viewBox="0 0 24 24" fill="none" stroke="#4b5563" stroke-width="1.9" stroke-linecap="round" stroke-linejoin="round"><rect x="12" y="4" width="6" height="16" rx="1"/><path d="M5 12h4M7 10v4"/></svg>
<div class="r" style="left:1283.50px;top:562.00px;width:1.00px;height:18.00px;background:#f0f0f2;"></div>
<div class="t" style="left:1290.50px;top:562.55px;font-size:13px;line-height:16.9px;color:#4b5563;font-weight:400;font-family:'Liberation Sans', sans-serif;">$</div>
<svg class="r" style="left:1310.40px;top:563.70px" width="14" height="14" viewBox="0 0 24 24" fill="none" stroke="#4b5563" stroke-width="2" stroke-linecap="round" stroke-linejoin="round"><path d="M18 6 6 18"/><circle cx="7" cy="7" r="1.2" fill="#4b5563"/><circle cx="17" cy="17" r="1.2" fill="#4b5563"/></svg>
<svg class="r" style="left:1331px;top:562px" width="18" height="18" viewBox="0 0 18 18" fill="none"><circle cx="4" cy="10" r="0.9" fill="#4b5563"/><text x="5.5" y="10.5" font-size="9" font-family="Liberation Sans" fill="#4b5563">0</text><path d="M6 14.5h7M6 14.5l1.8-1.5M6 14.5l1.8 1.5" stroke="#4b5563" stroke-width="1.1"/></svg>
<svg class="r" style="left:1352px;top:562px" width="20" height="18" viewBox="0 0 20 18" fill="none"><circle cx="2.5" cy="10" r="0.9" fill="#4b5563"/><text x="3.8" y="10.5" font-size="9" font-family="Liberation Sans" fill="#4b5563">00</text><path d="M7 14.5h7M14 14.5l-1.8-1.5M14 14.5l-1.8 1.5" stroke="#4b5563" stroke-width="1.1"/></svg>
<svg class="r" style="left:1375px;top:562px" width="18" height="18" viewBox="0 0 18 18" fill="none"><text x="3" y="8" font-size="7" font-family="Liberation Sans" fill="#4b5563">1</text><text x="3" y="15.5" font-size="7" font-family="Liberation Sans" fill="#4b5563">2</text><text x="9" y="12" font-size="8" font-family="Liberation Sans" fill="#4b5563">3</text></svg>
<svg class="r" style="left:1398.00px;top:563.70px" width="14" height="14" viewBox="0 0 24 24" fill="none" stroke="#4b5563" stroke-width="1.9" stroke-linecap="round" stroke-linejoin="round"><path d="M4 6h16M4 12h10M4 18h16"/></svg>
<svg class="r" style="left:1420.90px;top:563.70px" width="14" height="14" viewBox="0 0 24 24" fill="none" stroke="#4b5563" stroke-width="1.9" stroke-linecap="round" stroke-linejoin="round"><path d="M3 6h18M3 12h15a3 3 0 0 1 0 6h-4M3 18h6"/><path d="M16 16l-2 2 2 2"/></svg>
<div class="r" style="left:482.00px;top:589.50px;width:954.00px;height:29.00px;background:#fbfbfc;"></div>
<div class="r" style="left:518.50px;top:589.50px;width:138.50px;height:29.00px;background:#f5f6f8;"></div>
<div class="r" style="left:482.00px;top:618.50px;width:954.00px;height:32.10px;background:#fcfdfd;"></div>
<div class="r" style="left:482.00px;top:618.50px;width:954.00px;height:1.00px;background:#f3f4f6;"></div>
<div class="r" style="left:482.00px;top:650.10px;width:954.00px;height:1.00px;background:#eceef0;"></div>
<div class="r" style="left:482.00px;top:651.10px;width:36.50px;height:21.10px;background:#f3f4f6;"></div>
<div class="r" style="left:482.00px;top:672.20px;width:954.00px;height:1.00px;background:#f2f3f5;"></div>
<div class="r" style="left:482.00px;top:694.30px;width:954.00px;height:1.00px;background:#f2f3f5;"></div>
<div class="r" style="left:482.00px;top:716.40px;width:954.00px;height:1.00px;background:#f2f3f5;"></div>
<div class="r" style="left:482.00px;top:738.50px;width:954.00px;height:1.00px;background:#f2f3f5;"></div>
<div class="r" style="left:482.00px;top:760.60px;width:954.00px;height:1.00px;background:#f2f3f5;"></div>
<div class="r" style="left:482.00px;top:782.70px;width:954.00px;height:1.00px;background:#f2f3f5;"></div>
<div class="r" style="left:482.00px;top:804.80px;width:954.00px;height:1.00px;background:#f2f3f5;"></div>
<div class="r" style="left:482.00px;top:826.90px;width:954.00px;height:1.00px;background:#f2f3f5;"></div>
<div class="r" style="left:482.00px;top:849.00px;width:954.00px;height:1.00px;background:#f2f3f5;"></div>
<div class="r" style="left:518.00px;top:589.50px;width:1.00px;height:263.50px;background:#f1f2f4;"></div>
<div class="r" style="left:656.50px;top:589.50px;width:1.00px;height:263.50px;background:#f1f2f4;"></div>
<div class="r" style="left:795.00px;top:589.50px;width:1.00px;height:263.50px;background:#f1f2f4;"></div>
<div class="r" style="left:933.50px;top:589.50px;width:1.00px;height:263.50px;background:#f1f2f4;"></div>
<div class="r" style="left:1072.00px;top:589.50px;width:1.00px;height:263.50px;background:#f1f2f4;"></div>
<div class="r" style="left:1210.50px;top:589.50px;width:1.00px;height:263.50px;background:#f1f2f4;"></div>
<div class="r" style="left:1349.00px;top:589.50px;width:1.00px;height:263.50px;background:#f1f2f4;"></div>
<div class="t" style="left:487.75px;width:200px;text-align:center;top:598.73px;font-size:9.6px;line-height:12.48px;color:#6b7280;font-weight:400;font-family:'Liberation Mono', monospace;">A</div>
<div class="t" style="left:626.25px;width:200px;text-align:center;top:598.73px;font-size:9.6px;line-height:12.48px;color:#6b7280;font-weight:400;font-family:'Liberation Mono', monospace;">B</div>
<div class="t" style="left:764.75px;width:200px;text-align:center;top:598.73px;font-size:9.6px;line-height:12.48px;color:#6b7280;font-weight:400;font-family:'Liberation Mono', monospace;">C</div>
<div class="t" style="left:903.25px;width:200px;text-align:center;top:598.73px;font-size:9.6px;line-height:12.48px;color:#6b7280;font-weight:400;font-family:'Liberation Mono', monospace;">D</div>
<div class="t" style="left:1041.75px;width:200px;text-align:center;top:598.73px;font-size:9.6px;line-height:12.48px;color:#6b7280;font-weight:400;font-family:'Liberation Mono', monospace;">E</div>
<div class="t" style="left:1180.25px;width:200px;text-align:center;top:598.73px;font-size:9.6px;line-height:12.48px;color:#6b7280;font-weight:400;font-family:'Liberation Mono', monospace;">F</div>
<div class="t" style="left:1318.75px;width:200px;text-align:center;top:598.73px;font-size:9.6px;line-height:12.48px;color:#6b7280;font-weight:400;font-family:'Liberation Mono', monospace;">G</div>
<div class="t" style="left:531.00px;top:627.34px;font-size:11.1px;line-height:14.43px;color:#1f2937;font-weight:700;font-family:'Liberation Sans', sans-serif;">Stay Month</div>
<svg class="r" style="left:592.50px;top:629.30px" width="10" height="10" viewBox="0 0 24 24" fill="none" stroke="#1f2937" stroke-width="2.3" stroke-linecap="round" stroke-linejoin="round"><path d="M12 20V4M5 11l7-7 7 7"/></svg>
<div class="t" style="left:669.50px;top:627.74px;font-size:10.7px;line-height:13.91px;color:#33936a;font-weight:700;font-family:'Liberation Sans', sans-serif;letter-spacing:0.15px;">Occupancy STLP</div>
<div class="t" style="left:808.00px;top:627.74px;font-size:10.7px;line-height:13.91px;color:#33936a;font-weight:700;font-family:'Liberation Sans', sans-serif;letter-spacing:0.15px;">Occupancy Previous</div>
<div class="t" style="left:946.50px;top:627.74px;font-size:10.7px;line-height:13.91px;color:#33936a;font-weight:700;font-family:'Liberation Sans', sans-serif;letter-spacing:0.15px;">Units</div>
<div class="t" style="left:1085.00px;top:627.74px;font-size:10.7px;line-height:13.91px;color:#33936a;font-weight:700;font-family:'Liberation Sans', sans-serif;letter-spacing:0.15px;">Units STLP</div>
<div class="t" style="left:1223.50px;top:627.74px;font-size:10.7px;line-height:13.91px;color:#33936a;font-weight:700;font-family:'Liberation Sans', sans-serif;letter-spacing:0.15px;">Units Previous</div>
<div class="t" style="left:1362.00px;top:627.74px;font-size:10.7px;line-height:13.91px;color:#33936a;font-weight:700;font-family:'Liberation Sans', sans-serif;letter-spacing:0.15px;">ADR</div>
<svg class="r" style="left:976.60px;top:628.60px" width="10" height="10" viewBox="0 0 24 24" fill="none" stroke="#33936a" stroke-width="2.3" stroke-linecap="round"><circle cx="12" cy="12" r="9.6"/><path d="M12 11v6"/><circle cx="12" cy="7.3" r="0.7" fill="#33936a"/></svg>
<svg class="r" style="left:1386.60px;top:628.60px" width="10" height="10" viewBox="0 0 24 24" fill="none" stroke="#33936a" stroke-width="2.3" stroke-linecap="round"><circle cx="12" cy="12" r="9.6"/><path d="M12 11v6"/><circle cx="12" cy="7.3" r="0.7" fill="#33936a"/></svg>
<div class="t" style="left:400.30px;width:200px;text-align:center;top:654.93px;font-size:10px;line-height:13.0px;color:#6b7280;font-weight:400;font-family:'Liberation Mono', monospace;">1</div>
<div class="t" style="left:530.50px;top:654.84px;font-size:11px;line-height:14.3px;color:#374151;font-weight:400;font-family:'Liberation Sans', sans-serif;letter-spacing:0.5px;">Jan 2025</div>
<div class="t" style="left:669.00px;top:654.84px;font-size:11px;line-height:14.3px;color:#374151;font-weight:400;font-family:'Liberation Sans', sans-serif;letter-spacing:0.5px;">77.8%</div>
<div class="t" style="left:807.50px;top:654.84px;font-size:11px;line-height:14.3px;color:#374151;font-weight:400;font-family:'Liberation Sans', sans-serif;letter-spacing:0.5px;">77.8%</div>
<div class="t" style="left:946.00px;top:654.84px;font-size:11px;line-height:14.3px;color:#374151;font-weight:400;font-family:'Liberation Sans', sans-serif;letter-spacing:0.5px;">58,801</div>
<div class="t" style="left:1084.50px;top:654.84px;font-size:11px;line-height:14.3px;color:#374151;font-weight:400;font-family:'Liberation Sans', sans-serif;letter-spacing:0.5px;">57,750</div>
<div class="t" style="left:1223.00px;top:654.84px;font-size:11px;line-height:14.3px;color:#374151;font-weight:400;font-family:'Liberation Sans', sans-serif;letter-spacing:0.5px;">57,750</div>
<div class="t" style="left:1361.50px;top:654.84px;font-size:11px;line-height:14.3px;color:#374151;font-weight:400;font-family:'Liberation Sans', sans-serif;letter-spacing:0.5px;">375.28</div>
<div class="t" style="left:400.30px;width:200px;text-align:center;top:677.03px;font-size:10px;line-height:13.0px;color:#6b7280;font-weight:400;font-family:'Liberation Mono', monospace;">2</div>
<div class="t" style="left:530.50px;top:676.94px;font-size:11px;line-height:14.3px;color:#374151;font-weight:400;font-family:'Liberation Sans', sans-serif;letter-spacing:0.5px;">Feb 2025</div>
<div class="t" style="left:669.00px;top:676.94px;font-size:11px;line-height:14.3px;color:#374151;font-weight:400;font-family:'Liberation Sans', sans-serif;letter-spacing:0.5px;">78.2%</div>
<div class="t" style="left:807.50px;top:676.94px;font-size:11px;line-height:14.3px;color:#374151;font-weight:400;font-family:'Liberation Sans', sans-serif;letter-spacing:0.5px;">78.2%</div>
<div class="t" style="left:946.00px;top:676.94px;font-size:11px;line-height:14.3px;color:#374151;font-weight:400;font-family:'Liberation Sans', sans-serif;letter-spacing:0.5px;">53,263</div>
<div class="t" style="left:1084.50px;top:676.94px;font-size:11px;line-height:14.3px;color:#374151;font-weight:400;font-family:'Liberation Sans', sans-serif;letter-spacing:0.5px;">54,352</div>
<div class="t" style="left:1223.00px;top:676.94px;font-size:11px;line-height:14.3px;color:#374151;font-weight:400;font-family:'Liberation Sans', sans-serif;letter-spacing:0.5px;">54,352</div>
<div class="t" style="left:1361.50px;top:676.94px;font-size:11px;line-height:14.3px;color:#374151;font-weight:400;font-family:'Liberation Sans', sans-serif;letter-spacing:0.5px;">373.36</div>
<div class="t" style="left:400.30px;width:200px;text-align:center;top:699.13px;font-size:10px;line-height:13.0px;color:#6b7280;font-weight:400;font-family:'Liberation Mono', monospace;">3</div>
<div class="t" style="left:530.50px;top:699.04px;font-size:11px;line-height:14.3px;color:#374151;font-weight:400;font-family:'Liberation Sans', sans-serif;letter-spacing:0.5px;">Mar 2025</div>
<div class="t" style="left:669.00px;top:699.04px;font-size:11px;line-height:14.3px;color:#374151;font-weight:400;font-family:'Liberation Sans', sans-serif;letter-spacing:0.5px;">81.2%</div>
<div class="t" style="left:807.50px;top:699.04px;font-size:11px;line-height:14.3px;color:#374151;font-weight:400;font-family:'Liberation Sans', sans-serif;letter-spacing:0.5px;">81.2%</div>
<div class="t" style="left:946.00px;top:699.04px;font-size:11px;line-height:14.3px;color:#374151;font-weight:400;font-family:'Liberation Sans', sans-serif;letter-spacing:0.5px;">59,420</div>
<div class="t" style="left:1084.50px;top:699.04px;font-size:11px;line-height:14.3px;color:#374151;font-weight:400;font-family:'Liberation Sans', sans-serif;letter-spacing:0.5px;">60,314</div>
<div class="t" style="left:1223.00px;top:699.04px;font-size:11px;line-height:14.3px;color:#374151;font-weight:400;font-family:'Liberation Sans', sans-serif;letter-spacing:0.5px;">60,314</div>
<div class="t" style="left:1361.50px;top:699.04px;font-size:11px;line-height:14.3px;color:#374151;font-weight:400;font-family:'Liberation Sans', sans-serif;letter-spacing:0.5px;">372.31</div>
<div class="t" style="left:400.30px;width:200px;text-align:center;top:721.24px;font-size:10px;line-height:13.0px;color:#6b7280;font-weight:400;font-family:'Liberation Mono', monospace;">4</div>
<div class="t" style="left:530.50px;top:721.14px;font-size:11px;line-height:14.3px;color:#374151;font-weight:400;font-family:'Liberation Sans', sans-serif;letter-spacing:0.5px;">Apr 2025</div>
<div class="t" style="left:669.00px;top:721.14px;font-size:11px;line-height:14.3px;color:#374151;font-weight:400;font-family:'Liberation Sans', sans-serif;letter-spacing:0.5px;">72.0%</div>
<div class="t" style="left:807.50px;top:721.14px;font-size:11px;line-height:14.3px;color:#374151;font-weight:400;font-family:'Liberation Sans', sans-serif;letter-spacing:0.5px;">80.2%</div>
<div class="t" style="left:946.00px;top:721.14px;font-size:11px;line-height:14.3px;color:#374151;font-weight:400;font-family:'Liberation Sans', sans-serif;letter-spacing:0.5px;">46,626</div>
<div class="t" style="left:1084.50px;top:721.14px;font-size:11px;line-height:14.3px;color:#374151;font-weight:400;font-family:'Liberation Sans', sans-serif;letter-spacing:0.5px;">51,782</div>
<div class="t" style="left:1223.00px;top:721.14px;font-size:11px;line-height:14.3px;color:#374151;font-weight:400;font-family:'Liberation Sans', sans-serif;letter-spacing:0.5px;">57,649</div>
<div class="t" style="left:1361.50px;top:721.14px;font-size:11px;line-height:14.3px;color:#374151;font-weight:400;font-family:'Liberation Sans', sans-serif;letter-spacing:0.5px;">377.36</div>
<div class="t" style="left:400.30px;width:200px;text-align:center;top:743.33px;font-size:10px;line-height:13.0px;color:#6b7280;font-weight:400;font-family:'Liberation Mono', monospace;">5</div>
<div class="t" style="left:530.50px;top:743.24px;font-size:11px;line-height:14.3px;color:#374151;font-weight:400;font-family:'Liberation Sans', sans-serif;letter-spacing:0.5px;">May 2025</div>
<div class="t" style="left:669.00px;top:743.24px;font-size:11px;line-height:14.3px;color:#374151;font-weight:400;font-family:'Liberation Sans', sans-serif;letter-spacing:0.5px;">37.2%</div>
<div class="t" style="left:807.50px;top:743.24px;font-size:11px;line-height:14.3px;color:#374151;font-weight:400;font-family:'Liberation Sans', sans-serif;letter-spacing:0.5px;">82.0%</div>
<div class="t" style="left:946.00px;top:743.24px;font-size:11px;line-height:14.3px;color:#374151;font-weight:400;font-family:'Liberation Sans', sans-serif;letter-spacing:0.5px;">24,964</div>
<div class="t" style="left:1084.50px;top:743.24px;font-size:11px;line-height:14.3px;color:#374151;font-weight:400;font-family:'Liberation Sans', sans-serif;letter-spacing:0.5px;">27,657</div>
<div class="t" style="left:1223.00px;top:743.24px;font-size:11px;line-height:14.3px;color:#374151;font-weight:400;font-family:'Liberation Sans', sans-serif;letter-spacing:0.5px;">60,896</div>
<div class="t" style="left:1361.50px;top:743.24px;font-size:11px;line-height:14.3px;color:#374151;font-weight:400;font-family:'Liberation Sans', sans-serif;letter-spacing:0.5px;">346.52</div>
<div class="t" style="left:400.30px;width:200px;text-align:center;top:765.43px;font-size:10px;line-height:13.0px;color:#6b7280;font-weight:400;font-family:'Liberation Mono', monospace;">6</div>
<div class="t" style="left:530.50px;top:765.34px;font-size:11px;line-height:14.3px;color:#374151;font-weight:400;font-family:'Liberation Sans', sans-serif;letter-spacing:0.5px;">Jun 2025</div>
<div class="t" style="left:669.00px;top:765.34px;font-size:11px;line-height:14.3px;color:#374151;font-weight:400;font-family:'Liberation Sans', sans-serif;letter-spacing:0.5px;">17.2%</div>
<div class="t" style="left:807.50px;top:765.34px;font-size:11px;line-height:14.3px;color:#374151;font-weight:400;font-family:'Liberation Sans', sans-serif;letter-spacing:0.5px;">84.4%</div>
<div class="t" style="left:946.00px;top:765.34px;font-size:11px;line-height:14.3px;color:#374151;font-weight:400;font-family:'Liberation Sans', sans-serif;letter-spacing:0.5px;">11,007</div>
<div class="t" style="left:1084.50px;top:765.34px;font-size:11px;line-height:14.3px;color:#374151;font-weight:400;font-family:'Liberation Sans', sans-serif;letter-spacing:0.5px;">12,328</div>
<div class="t" style="left:1223.00px;top:765.34px;font-size:11px;line-height:14.3px;color:#374151;font-weight:400;font-family:'Liberation Sans', sans-serif;letter-spacing:0.5px;">60,700</div>
<div class="t" style="left:1361.50px;top:765.34px;font-size:11px;line-height:14.3px;color:#374151;font-weight:400;font-family:'Liberation Sans', sans-serif;letter-spacing:0.5px;">337.69</div>
<div class="t" style="left:400.30px;width:200px;text-align:center;top:787.53px;font-size:10px;line-height:13.0px;color:#6b7280;font-weight:400;font-family:'Liberation Mono', monospace;">7</div>
<div class="t" style="left:530.50px;top:787.44px;font-size:11px;line-height:14.3px;color:#374151;font-weight:400;font-family:'Liberation Sans', sans-serif;letter-spacing:0.5px;">Jul 2025</div>
<div class="t" style="left:669.00px;top:787.44px;font-size:11px;line-height:14.3px;color:#374151;font-weight:400;font-family:'Liberation Sans', sans-serif;letter-spacing:0.5px;">7.8%</div>
<div class="t" style="left:807.50px;top:787.44px;font-size:11px;line-height:14.3px;color:#374151;font-weight:400;font-family:'Liberation Sans', sans-serif;letter-spacing:0.5px;">86.3%</div>
<div class="t" style="left:946.00px;top:787.44px;font-size:11px;line-height:14.3px;color:#374151;font-weight:400;font-family:'Liberation Sans', sans-serif;letter-spacing:0.5px;">5,461</div>
<div class="t" style="left:1084.50px;top:787.44px;font-size:11px;line-height:14.3px;color:#374151;font-weight:400;font-family:'Liberation Sans', sans-serif;letter-spacing:0.5px;">5,825</div>
<div class="t" style="left:1223.00px;top:787.44px;font-size:11px;line-height:14.3px;color:#374151;font-weight:400;font-family:'Liberation Sans', sans-serif;letter-spacing:0.5px;">64,107</div>
<div class="t" style="left:1361.50px;top:787.44px;font-size:11px;line-height:14.3px;color:#374151;font-weight:400;font-family:'Liberation Sans', sans-serif;letter-spacing:0.5px;">346.85</div>
<div class="t" style="left:400.30px;width:200px;text-align:center;top:809.63px;font-size:10px;line-height:13.0px;color:#6b7280;font-weight:400;font-family:'Liberation Mono', monospace;">8</div>
<div class="t" style="left:530.50px;top:809.54px;font-size:11px;line-height:14.3px;color:#374151;font-weight:400;font-family:'Liberation Sans', sans-serif;letter-spacing:0.5px;">Aug 2025</div>
<div class="t" style="left:669.00px;top:809.54px;font-size:11px;line-height:14.3px;color:#374151;font-weight:400;font-family:'Liberation Sans', sans-serif;letter-spacing:0.5px;">3.3%</div>
<div class="t" style="left:807.50px;top:809.54px;font-size:11px;line-height:14.3px;color:#374151;font-weight:400;font-family:'Liberation Sans', sans-serif;letter-spacing:0.5px;">86.5%</div>
<div class="t" style="left:946.00px;top:809.54px;font-size:11px;line-height:14.3px;color:#374151;font-weight:400;font-family:'Liberation Sans', sans-serif;letter-spacing:0.5px;">2,485</div>
<div class="t" style="left:1084.50px;top:809.54px;font-size:11px;line-height:14.3px;color:#374151;font-weight:400;font-family:'Liberation Sans', sans-serif;letter-spacing:0.5px;">2,422</div>
<div class="t" style="left:1223.00px;top:809.54px;font-size:11px;line-height:14.3px;color:#374151;font-weight:400;font-family:'Liberation Sans', sans-serif;letter-spacing:0.5px;">64,256</div>
<div class="t" style="left:1361.50px;top:809.54px;font-size:11px;line-height:14.3px;color:#374151;font-weight:400;font-family:'Liberation Sans', sans-serif;letter-spacing:0.5px;">343.13</div>
<div class="t" style="left:400.30px;width:200px;text-align:center;top:831.74px;font-size:10px;line-height:13.0px;color:#6b7280;font-weight:400;font-family:'Liberation Mono', monospace;">9</div>
<div class="t" style="left:530.50px;top:831.64px;font-size:11px;line-height:14.3px;color:#374151;font-weight:400;font-family:'Liberation Sans', sans-serif;letter-spacing:0.5px;">Sep 2025</div>
<div class="t" style="left:669.00px;top:831.64px;font-size:11px;line-height:14.3px;color:#374151;font-weight:400;font-family:'Liberation Sans', sans-serif;letter-spacing:0.5px;">1.5%</div>
<div class="t" style="left:807.50px;top:831.64px;font-size:11px;line-height:14.3px;color:#374151;font-weight:400;font-family:'Liberation Sans', sans-serif;letter-spacing:0.5px;">85.1%</div>
<div class="t" style="left:946.00px;top:831.64px;font-size:11px;line-height:14.3px;color:#374151;font-weight:400;font-family:'Liberation Sans', sans-serif;letter-spacing:0.5px;">952</div>
<div class="t" style="left:1084.50px;top:831.64px;font-size:11px;line-height:14.3px;color:#374151;font-weight:400;font-family:'Liberation Sans', sans-serif;letter-spacing:0.5px;">1,047</div>
<div class="t" style="left:1223.00px;top:831.64px;font-size:11px;line-height:14.3px;color:#374151;font-weight:400;font-family:'Liberation Sans', sans-serif;letter-spacing:0.5px;">61,199</div>
<div class="t" style="left:1361.50px;top:831.64px;font-size:11px;line-height:14.3px;color:#374151;font-weight:400;font-family:'Liberation Sans', sans-serif;letter-spacing:0.5px;">306.75</div>
<div class="r" style="left:484.00px;top:855.70px;width:400.00px;height:7.60px;background:#d5d7db;border-radius:4px;"></div>
<div class="r" style="left:1438.00px;top:592.00px;width:7.00px;height:211.00px;background:#d5d7db;border-radius:4px;"></div>
<svg class="r" style="left:86.00px;top:879.50px" width="13" height="13" viewBox="0 0 24 24" fill="none" stroke="#111827" stroke-width="2" stroke-linecap="round" stroke-linejoin="round"><path d="M12 4v16M4 12h16"/></svg>
<svg class="r" style="left:126.20px;top:879.00px" width="14" height="14" viewBox="0 0 24 24" fill="none" stroke="#27272a" stroke-width="2.3" stroke-linecap="round" stroke-linejoin="round"><path d="M3.5 6h17M3.5 12h17M3.5 18h17"/></svg>
<div class="r" style="left:158.30px;top:871.20px;width:96.70px;height:29.90px;background:#fff;border-radius:6px;box-shadow:0 1px 3px rgba(0,0,0,0.12),0 0 0 1px rgba(0,0,0,0.03);"></div>
<svg class="r" style="left:166px;top:876px" width="30" height="20" viewBox="166 876 30 20"><path d="M177 880 L172 886.2 H175 L172.2 891.2 L178.6 884.6 H175.6 Z" fill="#f4dc72"/><path d="M182.8 881.6 C185 880.6 189.5 880.5 191.8 881.8 L191.4 884.8 C188.6 884 185 884 182.4 884.8 Z" fill="#f08a5d"/><path d="M182.2 885.3 C185 884.4 188.8 884.5 191.6 885.4" stroke="#fbc4b4" stroke-width="0.9" fill="none"/><path d="M181.4 886 C184.5 885 189 885.2 192 886.4 L191.6 889.8 C188.6 888.6 184.6 888.6 181.2 889.6 Z" fill="#dc4c48"/></svg>
<div class="t" style="left:196.80px;top:878.64px;font-size:11.4px;line-height:14.82px;color:#1f2937;font-weight:400;font-family:'Liberation Sans', sans-serif;">Query</div>
<svg class="r" style="left:237.30px;top:884.20px;" width="7" height="4.2" viewBox="0 0 7 4.2" fill="none"><path d="M0 0h7L3.5 4.2z" fill="#4b5563"/></svg>
<div class="r" style="left:1379.00px;top:866.00px;width:1.00px;height:40.00px;background:#ececee;"></div>
<div class="r" style="left:153.20px;top:866.00px;width:1.00px;height:40.00px;background:#efeff1;"></div>
<svg class="r" style="left:1392.60px;top:880.00px" width="12" height="12" viewBox="0 0 24 24" fill="none" stroke="#c8cacf" stroke-width="2" stroke-linecap="round" stroke-linejoin="round"><path d="M15 5l-7 7 7 7"/></svg>
<svg class="r" style="left:1422.00px;top:880.00px" width="12" height="12" viewBox="0 0 24 24" fill="none" stroke="#c8cacf" stroke-width="2" stroke-linecap="round" stroke-linejoin="round"><path d="M9 5l7 7-7 7"/></svg>
</body></html>
